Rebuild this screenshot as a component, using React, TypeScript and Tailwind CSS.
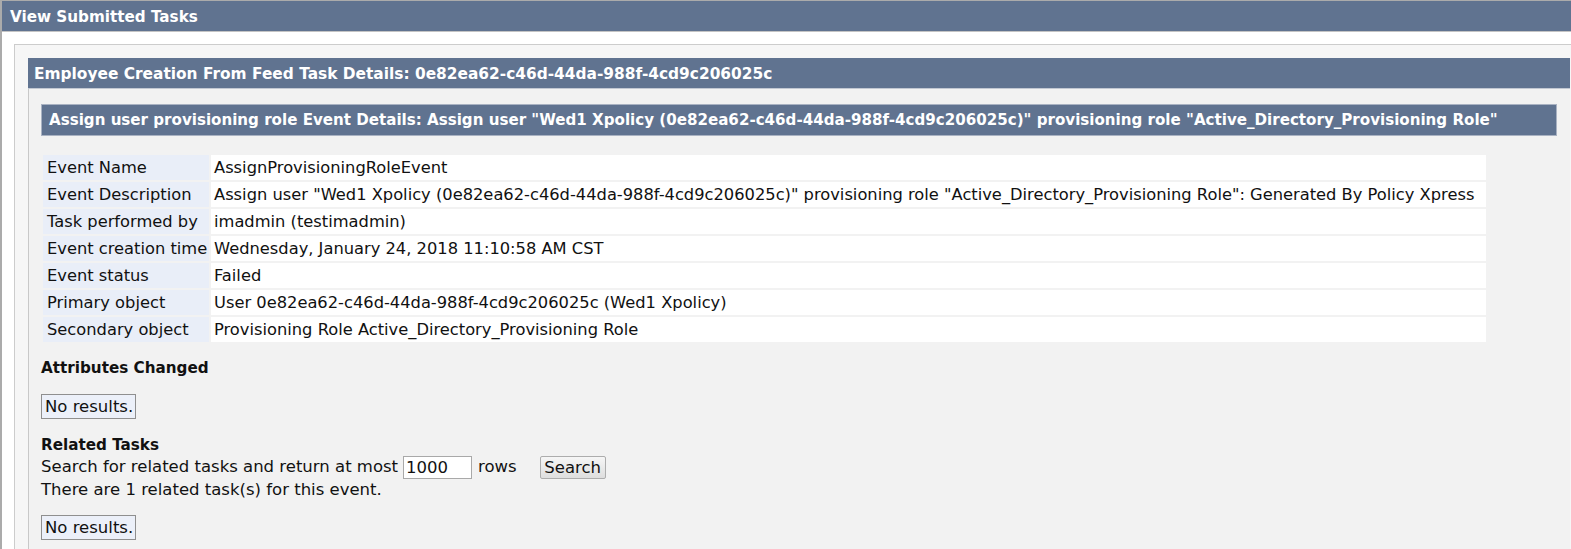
import React from 'react'

const rows: [string, string][] = [
  ['Event Name', 'AssignProvisioningRoleEvent'],
  [
    'Event Description',
    'Assign user "Wed1 Xpolicy (0e82ea62-c46d-44da-988f-4cd9c206025c)" provisioning role "Active_Directory_Provisioning Role": Generated By Policy Xpress',
  ],
  ['Task performed by', 'imadmin (testimadmin)'],
  ['Event creation time', 'Wednesday, January 24, 2018 11:10:58 AM CST'],
  ['Event status', 'Failed'],
  ['Primary object', 'User 0e82ea62-c46d-44da-988f-4cd9c206025c (Wed1 Xpolicy)'],
  ['Secondary object', 'Provisioning Role Active_Directory_Provisioning Role'],
]

const NoResults = () => (
  <div className="inline-block h-[25px] w-[95px] border border-[#8f8f8f] bg-[#ecf0f9] pl-[3px] leading-[23px]">
    No results.
  </div>
)

export default function App() {
  return (
    <div className="h-[549px] w-[1571px] overflow-hidden bg-white font-['DejaVu_Sans',Verdana,sans-serif] text-[16.5px] text-[#111]">
      <div className="w-[1596px] border-t border-l-2 border-[#ababab]">
        {/* page title */}
        <div className="h-[31px] border-b border-[#c4c4c4] bg-[#607390] pl-[8px] text-[15.2px] font-bold leading-[32px] text-white">
          View Submitted Tasks
        </div>

        <div className="px-[12px] pt-[12px]">
          <div className="border border-[#cccccc] bg-[#f6f6f6] px-[13px] pt-[13px]">
            {/* task box */}
            <div className="w-[1542px]">
              <div className="h-[31px] border-b border-[#c2c8d2] bg-[#607390] pl-[6px] text-[15.4px] font-bold leading-[32px] text-white">
                Employee Creation From Feed Task Details: 0e82ea62-c46d-44da-988f-4cd9c206025c
              </div>
              <div className="border-l border-[#c8c8c8] bg-[#f2f2f2] px-[12px] pt-[15px] pb-[40px]">
                <div className="h-[32px] w-[1516px] border border-[#a9b2c2] bg-[#607390] pl-[7px] text-[15.1px] font-bold leading-[31px] text-white">
                  Assign user provisioning role Event Details: Assign user "Wed1 Xpolicy (0e82ea62-c46d-44da-988f-4cd9c206025c)" provisioning role "Active_Directory_Provisioning Role"
                </div>

                {/* event details */}
                <table className="mt-[17px] w-[1447px] border-separate border-spacing-[2px] text-[16.3px]">
                  <tbody>
                    {rows.map(([label, value]) => (
                      <tr key={label}>
                        <td className="w-[166px] bg-[#e9eef8] pl-[4px] pr-0 py-[3px] leading-[19px] whitespace-nowrap">
                          {label}
                        </td>
                        <td className="bg-white px-[3px] py-[3px] leading-[19px] whitespace-nowrap">
                          {value}
                        </td>
                      </tr>
                    ))}
                  </tbody>
                </table>

                <div className="mt-[13px] text-[15.2px] font-bold leading-[22px]">Attributes Changed</div>
                <div className="mt-[15px]">
                  <NoResults />
                </div>

                <div className="mt-[14px] text-[15.2px] font-bold leading-[22px]">Related Tasks</div>
                <div className="flex h-[23px] items-center">
                  <span>Search for related tasks and return at most</span>
                  <input
                    readOnly
                    value="1000"
                    className="ml-[5px] h-[23px] w-[69px] border border-[#a9a9a9] bg-white px-[2px] text-[16.5px] leading-[21px] outline-none"
                  />
                  <span className="ml-[6px]">rows</span>
                  <button className="ml-[23px] h-[23px] w-[66px] rounded-[2px] border border-[#adadad] bg-gradient-to-b from-[#f6f6f6] to-[#dedede] text-[16.5px] leading-[21px]">
                    Search
                  </button>
                </div>
                <div className="leading-[22px]">There are 1 related task(s) for this event.</div>
                <div className="mt-[14px]">
                  <NoResults />
                </div>
              </div>
            </div>
          </div>
        </div>
      </div>
    </div>
  )
}
